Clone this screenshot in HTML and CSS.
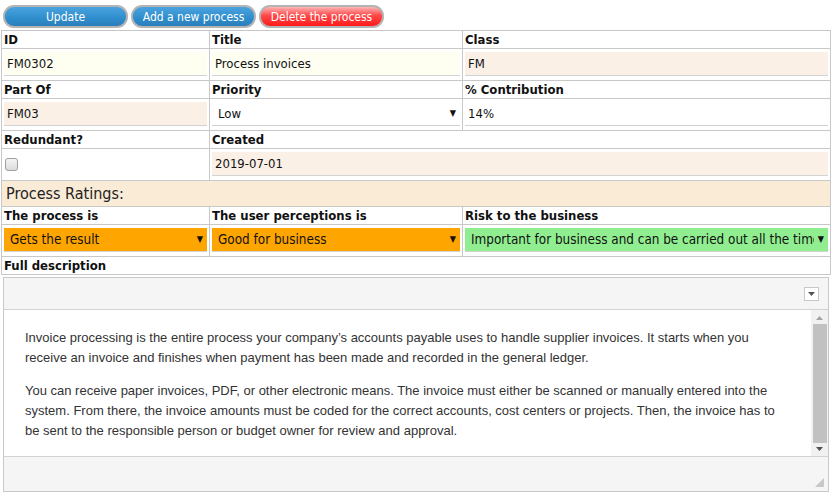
FILE: index.html
```html
<!DOCTYPE html>
<html lang="en">
  <head>
    <meta charset="UTF-8" />
    <meta name="viewport" content="width=device-width, initial-scale=1.0" />
    <link rel="stylesheet" href="styles.css">

    <title>Process</title>
  </head>
  <body>
    <div class="toolbar">
      <button class="btn">Update</button>
      <button class="btn">Add a new process</button>
      <button class="btn btn-red">Delete the process</button>
    </div>

    <table class="form">
      <colgroup>
        <col class="c1" />
        <col class="c2" />
        <col class="c3" />
      </colgroup>
      <tr class="label-row">
        <th>ID</th>
        <th>Title</th>
        <th>Class</th>
      </tr>
      <tr class="field-row">
        <td><div class="field ivory">FM0302</div></td>
        <td><div class="field ivory">Process invoices</div></td>
        <td><div class="field linen">FM</div></td>
      </tr>
      <tr class="label-row">
        <th>Part Of</th>
        <th>Priority</th>
        <th>% Contribution</th>
      </tr>
      <tr class="field-row">
        <td><div class="field linen">FM03</div></td>
        <td><div class="field select plain"><span>Low</span><i>&#9660;</i></div></td>
        <td><div class="field">14%</div></td>
      </tr>
      <tr class="label-row">
        <th>Redundant?</th>
        <th colspan="2">Created</th>
      </tr>
      <tr class="field-row">
        <td><span class="check"></span></td>
        <td colspan="2"><div class="field linen">2019-07-01</div></td>
      </tr>
      <tr class="section-row">
        <td colspan="3">Process Ratings:</td>
      </tr>
      <tr class="label-row">
        <th>The process is</th>
        <th>The user perceptions is</th>
        <th>Risk to the business</th>
      </tr>
      <tr class="field-row">
        <td><div class="field select orange rated"><span>Gets the result</span><i>&#9660;</i></div></td>
        <td><div class="field select orange rated"><span>Good for business</span><i>&#9660;</i></div></td>
        <td><div class="field select green rated"><span>Important for business and can be carried out all the time</span><i>&#9660;</i></div></td>
      </tr>
      <tr class="label-row">
        <th colspan="3">Full description</th>
      </tr>
    </table>

    <div class="editor">
      <div class="editor-top">
        <span class="menu-btn">
          <svg width="7" height="4" viewBox="0 0 7 4"><path d="M0 0h7L3.5 4z" fill="#555"/></svg>
        </span>
      </div>
      <div class="editor-body">
        <div class="editor-text">
          <p>Invoice processing is the entire process your company’s accounts payable uses to handle supplier invoices. It starts when you receive an invoice and finishes when payment has been made and recorded in the general ledger.</p>
          <p>You can receive paper invoices, PDF, or other electronic means. The invoice must either be scanned or manually entered into the system. From there, the invoice amounts must be coded for the correct accounts, cost centers or projects. Then, the invoice has to be sent to the responsible person or budget owner for review and approval.</p>
        </div>
        <div class="scrollbar">
          <svg class="arrow" width="7" height="4" viewBox="0 0 7 4"><path d="M0 4h7L3.5 0z" fill="#a3a3a3"/></svg>
          <div class="thumb"></div>
          <svg class="arrow" width="7" height="4" viewBox="0 0 7 4"><path d="M0 0h7L3.5 4z" fill="#505050"/></svg>
        </div>
      </div>
      <div class="editor-bottom">
        <svg width="9" height="9" viewBox="0 0 9 9"><path d="M9 0v9H0z" fill="#c8c8c8"/></svg>
      </div>
    </div>
  </body>
</html>
```

FILE: styles.css
```css
html,
body {
  margin: 0;
  padding: 0;
  background: #fff;
}

body {
  padding: 1px 0 0 1px;
  font-family: "DejaVu Sans Condensed", "DejaVu Sans", sans-serif;
  font-stretch: condensed;
  font-size: 13px;
  color: #111;
}

.toolbar {
  display: flex;
  gap: 3px;
  padding: 4px 0 2px 2px;
}

.btn {
  width: 125px;
  height: 23px;
  padding: 0;
  border: 2px solid #b4b4b4;
  border-radius: 11px;
  font-family: inherit;
  font-stretch: condensed;
  font-size: 12px;
  color: #fff;
  background: linear-gradient(#4aa3df, #2f8dcc 60%, #2a7fba);
}

.btn-red {
  background: linear-gradient(#ffb4b4, #ff4848 45%, #ff1a1a);
}

.form {
  width: 830px;
  border-collapse: collapse;
  table-layout: fixed;
}

.c1 {
  width: 208px;
}

.c2 {
  width: 253px;
}

.form th,
.form td {
  border: 1px solid #c8c8c8;
  padding: 0 2px;
  text-align: left;
  vertical-align: middle;
}

.label-row th {
  height: 17px;
  font-weight: bold;
  line-height: 16px;
}

.field-row td {
  height: 24px;
  padding: 3px 2px 4px 2px;
}

.field {
  height: 23px;
  line-height: 23px;
  padding: 0 3px;
  border-bottom: 1px solid #d2d2d2;
  white-space: nowrap;
  overflow: hidden;
}

.ivory {
  background: #fefef1;
}

.linen {
  background: #faf0e6;
}

.orange {
  background: #ffa500;
}

.green {
  background: #90ee90;
}

.select {
  display: flex;
  align-items: center;
  gap: 4px;
  padding: 0 4px 0 6px;
}

.select span {
  flex: 1;
  overflow: hidden;
  white-space: nowrap;
}

.select i {
  font-style: normal;
  font-size: 9px;
  color: #111;
}

.rated span {
  font-size: 13.4px;
}

.plain {
  border-bottom-color: #d2d2d2;
}

.check {
  display: block;
  width: 11px;
  height: 11px;
  border: 1px solid #a0a0a0;
  border-radius: 3px;
  background: linear-gradient(#f4f4f4, #dcdcdc);
  margin: 1px 0 0 1px;
}

.section-row td {
  height: 25px;
  padding: 0 4px;
  font-size: 16px;
  color: #222;
  background: #faebd7;
}

.editor {
  width: 824px;
  margin: 2px 0 0 2px;
  border: 1px solid #c8c8c8;
  font-family: "Liberation Sans", Arial, sans-serif;
}

.editor-top,
.editor-bottom {
  display: flex;
  justify-content: flex-end;
  height: 31px;
  background: #f5f5f5;
}

.editor-top {
  align-items: center;
  padding-right: 9px;
  border-bottom: 1px solid #d2d2d2;
}

.menu-btn {
  display: flex;
  align-items: center;
  justify-content: center;
  width: 13px;
  height: 12px;
  border: 1px solid #c8c8c8;
  background: #fff;
}

.editor-body {
  display: flex;
  height: 146px;
  background: #fff;
}

.editor-text {
  flex: 1;
  padding: 18px 20px 0 21px;
  font-size: 13px;
  line-height: 20px;
  color: #333;
}

.editor-text p {
  margin: 0 0 13px;
}

.scrollbar {
  display: flex;
  flex-direction: column;
  align-items: center;
  width: 17px;
  padding: 6px 0 5px;
  background: #f1f1f1;
}

.thumb {
  flex: 1;
  width: 14px;
  margin: 4px 0;
  background: #c1c1c1;
}

.editor-bottom {
  height: 30px;
  align-items: flex-end;
  padding: 0 4px 4px 0;
  border-top: 1px solid #d2d2d2;
}
```
